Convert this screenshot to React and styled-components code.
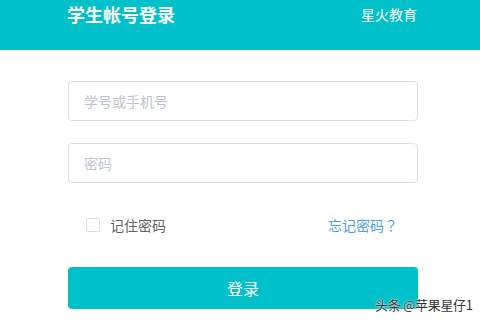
import styled, { createGlobalStyle } from "styled-components";

const GlobalStyle = createGlobalStyle`
	html, body {
		margin: 0;
		padding: 0;
		background: #fff;
		font-family: "Noto Sans CJK SC", "Noto Sans", sans-serif;
	}
`;

const Page = styled.div`
	position: relative;
	width: 480px;
	height: 320px;
	overflow: hidden;
`;

const Header = styled.div`
	display: flex;
	justify-content: space-between;
	align-items: flex-start;
	height: 50px;
	box-sizing: border-box;
	padding: 3px 63px 0 67px;
	background-color: #00c1c9;
	color: #fff;
`;

const Title = styled.h1`
	margin: 0;
	font-size: 18px;
	line-height: 22px;
	font-weight: 700;
`;

const Brand = styled.span`
	font-size: 14px;
	line-height: 20px;
	margin-top: 1px;
`;

const Form = styled.form`
	display: flex;
	flex-direction: column;
	width: 350px;
	margin: 31px 0 0 68px;
`;

const Input = styled.input`
	box-sizing: border-box;
	width: 100%;
	height: 40px;
	margin-bottom: ${(p) => p.$gap || 0}px;
	padding: 0 15px;
	border: 1px solid #dcdfe6;
	border-radius: 4px;
	font-family: inherit;
	font-size: 14px;
	color: #606266;
	outline: none;
	&::placeholder {
		color: #c0c4cc;
	}
`;

const OptionRow = styled.div`
	display: flex;
	justify-content: space-between;
	align-items: center;
	height: 20px;
	margin-top: 32px;
	padding: 0 20px 0 18px;
`;

const Remember = styled.label`
	display: flex;
	align-items: center;
	gap: 10px;
	font-size: 14px;
	color: #606266;
`;

const Box = styled.span`
	display: inline-block;
	box-sizing: border-box;
	width: 14px;
	height: 14px;
	border: 1px solid #dcdfe6;
	border-radius: 2px;
	background: #fff;
`;

const Forgot = styled.a`
	font-size: 14px;
	color: #4a9ff0;
	text-decoration: none;
`;

// centred full-width question mark, as in the original
const Mark = styled.span`
	font-family: "Noto Sans CJK JP", sans-serif;
`;

const LoginButton = styled.button`
	height: 42px;
	margin-top: 32px;
	border: 0;
	border-radius: 4px;
	background-color: #00c1c9;
	color: #fff;
	font-family: inherit;
	font-size: 16px;
	cursor: pointer;
`;

const Watermark = styled.div`
	position: absolute;
	left: 375px;
	top: 296px;
	font-size: 13px;
	line-height: 18px;
	letter-spacing: -0.3px;
	color: #333;
	text-shadow: 0 0 2px #fff, 0 0 1px #fff;
`;

const App = () => {
	return (
		<Page>
			<GlobalStyle />
			<Header>
				<Title>学生帐号登录</Title>
				<Brand>星火教育</Brand>
			</Header>
			<Form onSubmit={(e) => e.preventDefault()}>
				<Input $gap={22} placeholder="学号或手机号" />
				<Input type="password" placeholder="密码" />
				<OptionRow>
					<Remember>
						<Box />
						记住密码
					</Remember>
					<Forgot href="#">
						忘记密码<Mark>？</Mark>
					</Forgot>
				</OptionRow>
				<LoginButton type="submit">登录</LoginButton>
			</Form>
			<Watermark>头条 @苹果星仔1</Watermark>
		</Page>
	);
};

export default App;
